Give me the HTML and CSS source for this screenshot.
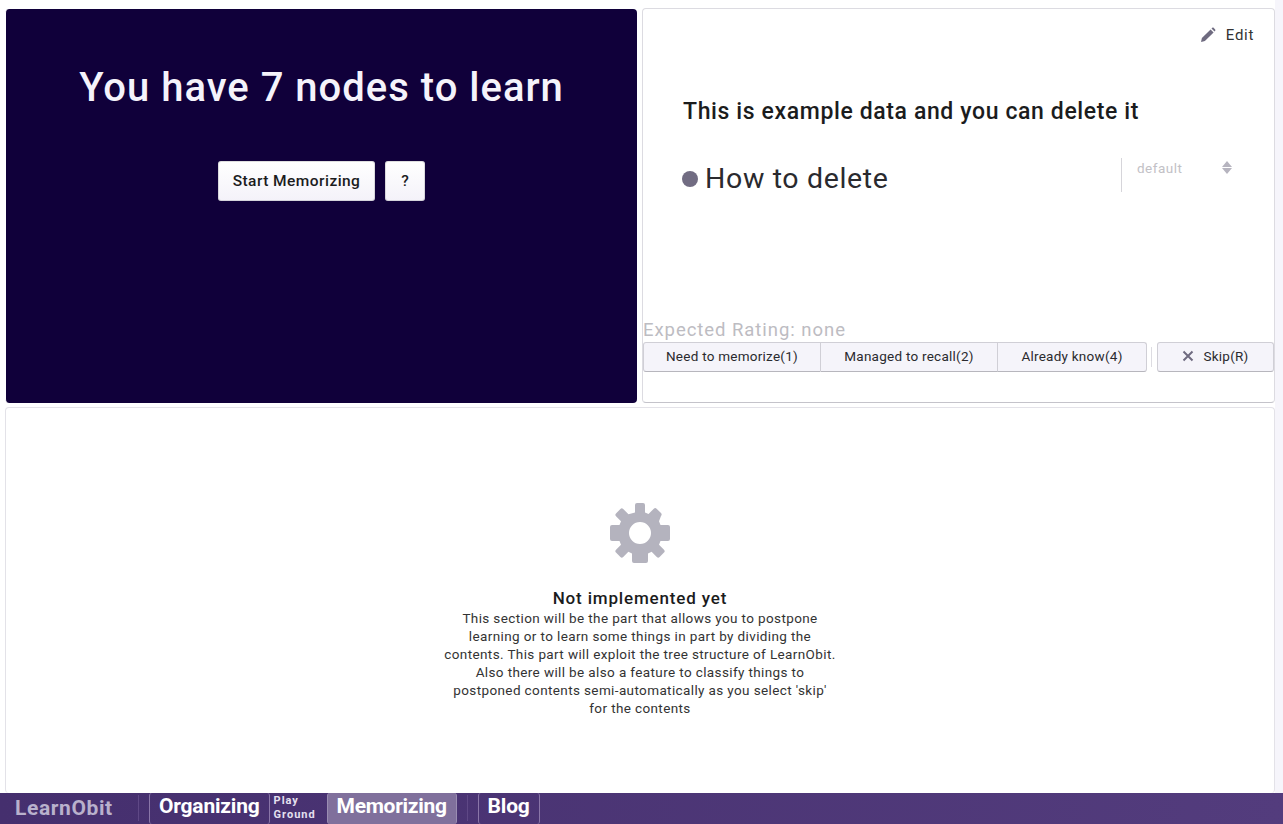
FILE: index.html
```html
<!DOCTYPE html>
<html lang="en">
<head>
<meta charset="utf-8">
<title>LearnObit</title>
<link rel="stylesheet" href="styles.css">
</head>
<body>
<main class="workspace">
  <div class="top-row">
    <section class="panel-dark">
      <h1 class="learn-title">You have 7 nodes to learn</h1>
      <div class="start-actions">
        <button class="light-btn">Start Memorizing</button>
        <button class="light-btn help-btn">?</button>
      </div>
    </section>
    <section class="card card-node">
      <div class="edit-row">
        <svg class="pencil" viewBox="0 0 16 16" width="16" height="16"><path d="M1 15l.9-3.9L10.6 2.400l3 3L4.900 14.100zM11.500 1.500l.8-.7c.4-.3 1-.3 1.300 0l1.600 1.600c.3.400.3.900 0 1.300l-.7.800z"/></svg>
        <span>Edit</span>
      </div>
      <h2 class="node-title">This is example data and you can delete it</h2>
      <div class="node-row">
        <span class="bullet"></span>
        <span class="node-text">How to delete</span>
        <div class="select-box">
          <span>default</span>
          <svg class="updown" viewBox="0 0 10 13" width="10" height="13"><path d="M5 0l5 6H0zM5 13L0 7h10z"/></svg>
        </div>
      </div>
      <div class="rating-area">
        <div class="expected">Expected Rating: none</div>
        <div class="rating-row">
          <div class="btn-group">
            <button class="rate-btn rate-1">Need to memorize(1)</button>
            <button class="rate-btn rate-2">Managed to recall(2)</button>
            <button class="rate-btn rate-3">Already know(4)</button>
          </div>
          <span class="v-sep"></span>
          <button class="rate-btn skip-btn">
            <svg viewBox="0 0 12 12" width="12" height="12"><path d="M1.500 1.500l9 9M10.500 1.500l-9 9"/></svg>
            <span>Skip(R)</span>
          </button>
        </div>
      </div>
    </section>
  </div>
  <section class="card card-bottom">
    <svg class="gear" viewBox="0 0 60 60" width="60" height="60"><path fill-rule="evenodd" d="M25 2a2 2 0 0 1 2-2h6a2 2 0 0 1 2 2v7.500l3.500 1.500 5.300-5.300a2 2 0 0 1 2.800 0l4.400 4.400a2 2 0 0 1 0 2.800L49 18.200l1.500 3.800H58a2 2 0 0 1 2 2v12a2 2 0 0 1-2 2h-7.500L49 41.800l5 5a2 2 0 0 1 0 2.800l-4.400 4.400a2 2 0 0 1-2.800 0L41.600 48.800 38 50.500V58a2 2 0 0 1-2 2H24a2 2 0 0 1-2-2v-7.500l-3.600-1.700-5.200 5.200a2 2 0 0 1-2.800 0L6 49.600a2 2 0 0 1 0-2.800l5-5L9.500 38H2a2 2 0 0 1-2-2V24a2 2 0 0 1 2-2h7.500l1.500-3.800-5-5a2 2 0 0 1 0-2.800L10.400 6a2 2 0 0 1 2.800 0l5.300 5.300L25 9.500zM30 19a11 11 0 1 0 0 22 11 11 0 0 0 0-22z"/></svg>
    <h3 class="ni-title">Not implemented yet</h3>
    <p class="ni-text">This section will be the part that allows you to postpone<br>learning or to learn some things in part by dividing the<br>contents. This part will exploit the tree structure of LearnObit.<br>Also there will be also a feature to classify things to<br>postponed contents semi-automatically as you select 'skip'<br>for the contents</p>
  </section>
</main>
<nav class="navbar">
  <span class="brand">LearnObit</span>
  <span class="nav-sep"></span>
  <a class="nav-item">Organizing</a>
  <a class="nav-play">Play<br>Ground</a>
  <a class="nav-item active">Memorizing</a>
  <span class="nav-sep sep-b"></span>
  <a class="nav-item blog">Blog</a>
</nav>
</body>
</html>
```
FILE: styles.css
```css
* { box-sizing: border-box; }
html, body { margin: 0; height: 100%; }
body {
  background: #fff;
  font-family: "Roboto", "Liberation Sans", sans-serif;
  color: #1b1c1d;
  display: flex;
  flex-direction: column;
  height: 824px;
  overflow: hidden;
}
.workspace {
  flex: 1;
  min-height: 0;
  display: flex;
  flex-direction: column;
  gap: 4px;
  padding: 9px 8px 0 5px;
  background: linear-gradient(to right, #fff 1275px, #f6f5fb 1275px);
}
.top-row { display: flex; gap: 5px; height: 394px; }
.panel-dark {
  width: 632px;
  flex: none;
  background: #10003a;
  border-radius: 4px;
  border-left: 1px solid #fff;
  display: flex;
  flex-direction: column;
  align-items: center;
  padding-top: 54px;
}
.learn-title {
  margin: 0;
  font-size: 40px;
  line-height: 50px;
  font-weight: 500;
  color: #f5f3fb;
  letter-spacing: 1px;
}
.start-actions { display: flex; gap: 10px; margin-top: 48px; }
.light-btn {
  height: 40px;
  padding: 0 15px;
  border: 0;
  border-radius: 3px;
  background: linear-gradient(#fff, #f4f2f9);
  box-shadow: 0 0 0 1px rgba(34,36,38,.15) inset;
  font: 500 15.500px "Roboto", sans-serif;
  color: #1b1c1d;
  letter-spacing: .45px;
}
.help-btn { width: 40px; padding: 0; }
.card {
  background: #fff;
  border: 1px solid #e3e2e8;
  border-radius: 4px;
}
.card-node {
  flex: 1;
  display: flex;
  flex-direction: column;
  margin-top: -1px;
  padding: 0;
  border-color: #dcdbe1;
  border-bottom-color: #c4c3ca;
}
.edit-row {
  display: flex;
  justify-content: flex-end;
  align-items: center;
  gap: 10px;
  padding: 17px 20px 0 0;
  font-size: 15px;
  line-height: 18px;
  color: #333;
  letter-spacing: .7px;
}
.pencil { fill: #6f6b80; }
.node-title {
  margin: 53px 0 0 40px;
  font-size: 23px;
  line-height: 30px;
  font-weight: 500;
  color: #1b1c1d;
  letter-spacing: .62px;
}
.node-row {
  display: flex;
  align-items: center;
  margin: 35px 0 0 39px;
  height: 34px;
}
.bullet { width: 16px; height: 16px; border-radius: 50%; background: #716c82; }
.node-text {
  margin-left: 7px;
  font-size: 28.500px;
  font-weight: 400;
  color: #2a2a2e;
  letter-spacing: .65px;
  line-height: 34px;
}
.select-box {
  margin-left: auto;
  margin-right: 41px;
  margin-bottom: 8px;
  width: 112px;
  height: 34px;
  border-left: 1px solid #d6d5da;
  display: flex;
  align-items: center;
  justify-content: space-between;
  padding: 0 1px 15px 15px;
  font-size: 13.500px;
  color: #c2c1c6;
  letter-spacing: .5px;
}
.updown { fill: #b6b4bf; }
.rating-area { margin-top: auto; padding-bottom: 30px; }
.expected {
  font-size: 18.500px;
  line-height: 23px;
  color: #bdbcc2;
  letter-spacing: .95px;
}
.rating-row { display: flex; align-items: center; }
.btn-group { display: flex; }
.rate-btn {
  height: 30px;
  background: #f5f4fa;
  border: 1px solid #d0cfd6;
  border-bottom-color: #b7b6bd;
  padding: 0 0 2px;
  font: 400 13.500px "Roboto", sans-serif;
  color: #2a2a2e;
  letter-spacing: .25px;
}
.rate-1 { width: 178px; border-radius: 3px 0 0 3px; }
.rate-2 { width: 177px; border-left: 0; }
.rate-3 { width: 149px; border-left: 0; border-radius: 0 3px 3px 0; }
.v-sep { width: 1px; height: 20px; background: #dddce2; margin: 0 5px 0 4px; }
.skip-btn {
  width: 117px;
  border-radius: 3px;
  display: flex;
  align-items: center;
  justify-content: center;
  gap: 9px;
}
.skip-btn svg { stroke: #6f6b80; stroke-width: 2; fill: none; }
.card-bottom {
  flex: 1;
  display: flex;
  flex-direction: column;
  align-items: center;
  padding-top: 95px;
  border-bottom: 0;
}
.gear { fill: #b4b3be; display: block; }
.ni-title {
  margin: 25px 0 0;
  font-size: 17px;
  line-height: 20px;
  font-weight: 500;
  color: #1b1c1d;
  letter-spacing: .84px;
}
.ni-text {
  margin: 1px 0 0;
  text-align: center;
  font-size: 13.500px;
  line-height: 18px;
  color: #333;
  letter-spacing: .38px;
}
.navbar {
  height: 31px;
  flex: none;
  display: flex;
  align-items: stretch;
  background: linear-gradient(to right, #452f6e, #533c7d);
  color: #fff;
  font-weight: 700;
  font-size: 21px;
  line-height: 27px;
}
.brand {
  width: 138px;
  padding: 2px 0 0 15px;
  color: #b9b1cc;
  letter-spacing: .6px;
}
.nav-sep { width: 1px; height: 26px; margin-top: 2px; background: #5f4886; }
.nav-item {
  display: block;
  padding: 0 9px;
  border-left: 1px solid #8a76a8;
  border-right: 1px solid #8a76a8;
  border-radius: 3px;
  letter-spacing: -0.2px;
}
.nav-sep + .nav-item { margin-left: 10px; }
.nav-play {
  width: 57px;
  padding: 1px 0 0 4px;
  font-size: 11px;
  line-height: 14px;
  letter-spacing: 1px;
  color: #e5e0ef;
}
.active { background: #80709c; border-color: #9a8db2; letter-spacing: -0.3px; }
.sep-b { margin-left: 10px; }
```
